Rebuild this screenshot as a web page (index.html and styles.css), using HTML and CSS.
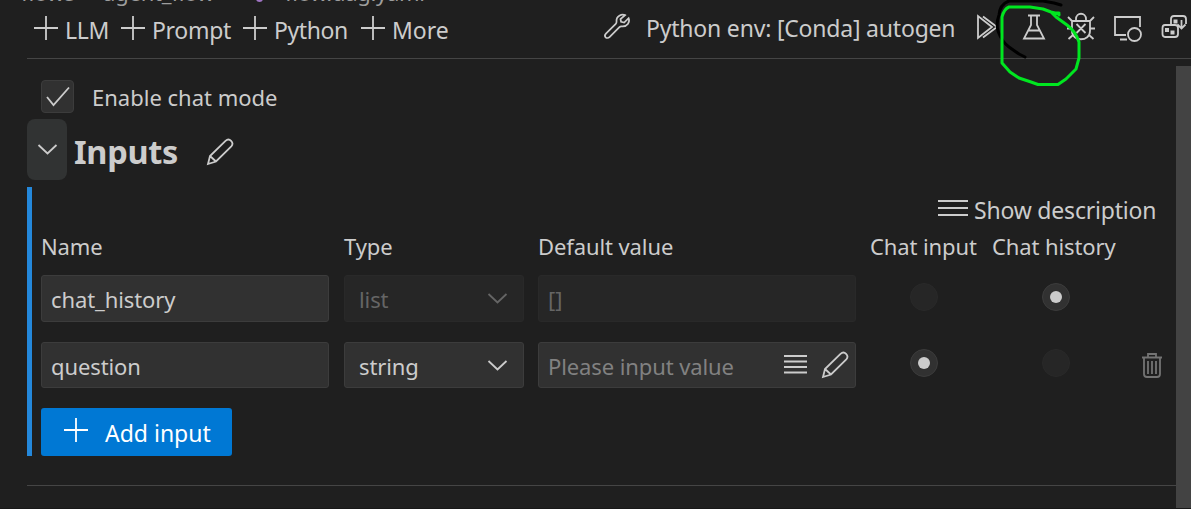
FILE: index.html
```
<!DOCTYPE html>
<html lang="en">
<head>
<meta charset="utf-8">
<title>flow.dag.yaml</title>
<link rel="stylesheet" href="styles.css">
</head>
<body>
<nav class="crumbs"><span class="crumb-a">flows</span><span class="crumb-sep">›</span><span class="crumb-b">agent_flow</span><span class="crumb-dot"></span><span class="crumb-c">flow.dag.yaml</span></nav>
<header class="toolbar">
  <div class="add-tools">
    <button class="tool tool-llm"><svg class="plus" viewBox="0 0 24 24"><path d="M12 0v24M0 12h24"/></svg><span>LLM</span></button>
    <button class="tool tool-prompt"><svg class="plus" viewBox="0 0 24 24"><path d="M12 0v24M0 12h24"/></svg><span>Prompt</span></button>
    <button class="tool tool-python"><svg class="plus" viewBox="0 0 24 24"><path d="M12 0v24M0 12h24"/></svg><span>Python</span></button>
    <button class="tool tool-more"><svg class="plus" viewBox="0 0 24 24"><path d="M12 0v24M0 12h24"/></svg><span>More</span></button>
  </div>
  <div class="env">
    <svg class="wrench" viewBox="0 0 28 28"><path d="M21.8 2.2C18.5.7 12.3 3 13 8.900c.1 1-.1 1.600-.8 2.300L2 21.400C.7 22.700.8 24.200 1.700 25.200c1 1 2.800 1 4-.2L16 14.700c.7-.7 1.300-.9 2.300-.8C24.200 14.500 27.200 9.500 25.500 5.400L20.900 10l-3.200-.8-.6-3z"/></svg>
    <span>Python env: [Conda] autogen</span>
  </div>
  <div class="actions">
    <svg class="run" viewBox="0 0 24 26"><path d="M2 2v22l14-11zM7 2.500L21 13 7 23.500"/></svg>
    <svg class="flask" viewBox="0 0 24 26"><path d="M6 1.500h12M9 1.500v9.500L2 24.500h20l-7-13.500v-9.500M6 16.500h12"/></svg>
    <svg class="bug" viewBox="0 0 30 30"><path d="M10 9V7c0-7 10-7 10 0v2M6 9h18v10c0 11-18 11-18 0zM10.500 12l9 9M19.500 12l-9 9M1 16.500h5M24 16.500h5M6 9L2 5M24 9l4-4M7 23l-4.500 4M23 23l4.500 4"/></svg>
    <svg class="remote" viewBox="0 0 30 28"><path d="M13 20H2V2h25v10M7 24.500h7"/><circle cx="21.500" cy="19.500" r="6.500"/></svg>
    <svg class="windows" viewBox="0 0 28 26"><path d="M10 10V4q0-3 3-3h9q3 0 3 3v5M4 10h10q3 0 3 3v6q0 3-3 3H4q-2.500 0-2.500-3v-6q0-3 2.500-3zM20.500 5v8.500M16.500 9.500l4 4 4-4"/><path class="solid" d="M4 13h4v4H4zM9.500 15.500h4v4h-4zM12.500 4.500h4v4h-4z"/></svg>
  </div>
  <svg class="markup" viewBox="0 0 90 90"><path class="ink-black" d="M64 5L57 3 46 1H12Q3 4 2 15Q-1 23 1 31Q5 42 12 47L22 54 28 57"/><path class="ink-green" d="M62 15V14L54 12 46 9 33 7H12Q7 9 5 17V63L13 72 22 78 34 82 41 84.500H61L69 79 79 69 82 58V42Q79 32 70 25L59 17 55 13 62 13"/></svg>
</header>
<main class="content">
  <label class="chat-mode"><span class="checkbox"><svg class="tick" viewBox="0 0 24 22"><path d="M1 11l6.500 8L23 1.500"/></svg></span><span class="mode-text">Enable chat mode</span></label>
  <div class="heading">
    <button class="collapse"><svg class="chevron" viewBox="0 0 19 11"><path d="M.5 1l9 8.500 9-8.500"/></svg></button>
    <h1>Inputs</h1>
    <svg class="pencil" viewBox="0 0 28 28"><path d="M2 26l2-8L19.500 2.800c4-3.600 9 1.800 5.800 5.500L10 23.500zM4 18l6 5.500"/></svg>
  </div>
  <section class="panel">
    <div class="describe"><svg class="lines" viewBox="0 0 30 18"><path d="M0 2h30M0 9h30M0 16h30"/></svg><span>Show description</span></div>
    <div class="row labels"><span>Name</span><span>Type</span><span>Default value</span><span>Chat input</span><span>Chat history</span></div>
    <div class="row fields first">
      <div class="field name">chat_history</div>
      <div class="field select off"><span>list</span><svg class="chevron" viewBox="0 0 19 11"><path d="M.5 1l9 8.500 9-8.500"/></svg></div>
      <div class="field off">[]</div>
      <span class="radio off"></span><span class="radio on"></span>
    </div>
    <div class="row fields second">
      <div class="field name">question</div>
      <div class="field select"><span>string</span><svg class="chevron" viewBox="0 0 19 11"><path d="M.5 1l9 8.500 9-8.500"/></svg></div>
      <div class="field value"><span class="hint">Please input value</span><svg class="menu" viewBox="0 0 23 20"><path d="M0 2h23M0 7.500h23M0 13h23M0 18.500h23"/></svg><svg class="pencil" viewBox="0 0 28 28"><path d="M2 26l2-8L19.500 2.800c4-3.600 9 1.800 5.800 5.500L10 23.500zM4 18l6 5.500"/></svg></div>
      <span class="radio on"></span><span class="radio off"></span>
      <svg class="trash" viewBox="0 0 20 25"><path d="M0 4.500h20M6 4V1h8v3M2 5v16q0 3 3 3h10q3 0 3-3V5M6 8v13M10 8v13M14 8v13"/></svg>
    </div>
    <button class="add-input"><svg class="plus" viewBox="0 0 24 24"><path d="M12 0v24M0 12h24"/></svg><span>Add input</span></button>
  </section>
</main>
<aside class="scrollbar"></aside>
</body>
</html>
```
FILE: styles.css
```
* { box-sizing: border-box; }
body { margin: 0; width: 1191px; height: 509px; overflow: hidden; position: relative; background: #1f1f1f; color: #ccc; font: 22px/30px "Noto Sans", "Open Sans", sans-serif; border-bottom: 1px solid #181818; white-space: nowrap; }
button { font: inherit; color: inherit; background: none; border: 0; padding: 0; margin: 0; display: flex; }
svg { display: block; flex: none; overflow: visible; fill: none; stroke: #ccc; stroke-width: 1.800; }
span, h1 { flex: none; }

.crumbs { height: 6px; padding-left: 21px; display: flex; align-items: flex-end; overflow: hidden; color: #9d9d9d; }
.crumbs span { margin-bottom: -1px; }
.crumb-a { width: 62px; }
.crumb-sep { width: 20px; }
.crumb-b { width: 153px; letter-spacing: -.2px; }
.crumbs .crumb-dot { width: 7px; height: 7px; border-radius: 50%; background: #a074c4; margin-bottom: 4px; }
.crumb-c { margin-left: 22px; letter-spacing: -.3px; }

.toolbar { position: relative; height: 53px; margin-left: 27px; border-bottom: 1px solid #454545; display: flex; font-size: 23px; }
.add-tools { display: flex; padding: 9px 0 0 7px; width: 576px; }
.plus { width: 24px; height: 24px; }
.tool .plus { margin-top: 1px; }
.tool span { margin-left: 7px; }
.tool-llm { width: 87px; letter-spacing: -.3px; }
.tool-prompt { width: 122px; letter-spacing: -.3px; }
.tool-python { width: 118px; letter-spacing: -.4px; }
.env { display: flex; padding: 7px 0 0 1px; width: 373px; letter-spacing: -.2px; }
.wrench { width: 27px; height: 27px; margin-right: 15px; }
.actions { display: flex; align-items: flex-start; padding-top: 8px; }
.run { width: 24px; height: 26px; margin-right: 22px; }
.flask { width: 24px; height: 26px; margin-right: 20px; }
.bug { width: 30px; height: 30px; margin: -2px 17px 0 0; }
.remote { width: 30px; height: 28px; margin: 1px 18px 0 0; }
.windows { width: 28px; height: 26px; margin-top: 1px; }
.windows .solid { fill: #ccc; stroke: none; }
.markup { position: absolute; left: 970px; top: -6px; width: 90px; height: 90px; z-index: 2; stroke-width: 3; stroke-linejoin: round; stroke-linecap: round; }
.ink-black { stroke: #000; }
.ink-green { stroke: #00e620; }

.content { margin-left: 27px; width: 1149px; height: 427px; padding-top: 21px; border-bottom: 1px solid #454545; }
.chat-mode { display: flex; height: 39px; padding-left: 14px; }
.checkbox { width: 33px; height: 33px; margin-right: 18px; border: 1px solid #3c3c3c; border-radius: 4px; background: #313131; display: grid; place-items: center; }
.tick { width: 24px; height: 22px; }
.mode-text { margin-top: 2px; }
.heading { display: flex; height: 68px; }
.collapse { width: 40px; height: 61px; border-radius: 8px; background: #313333; justify-content: center; padding-top: 25px; margin-right: 7px; }
.chevron { width: 19px; height: 11px; }
h1 { width: 105px; margin: 12px 27px 0 0; font-size: 32.500px; line-height: 42px; font-weight: 700; letter-spacing: -.3px; }
.heading .pencil { margin-top: 19px; }
.pencil { width: 28px; height: 28px; }

.panel { border-left: 5px solid #2488db; padding: 8px 0 0 9px; height: 269px; }
.describe { display: flex; padding-left: 897px; height: 36px; font-size: 23px; letter-spacing: -.2px; }
.lines { width: 30px; height: 18px; margin: 4px 6px 0 0; }
.row { display: grid; align-items: center; }
.labels { grid-template-columns: 303px 194px 332px 122px 150px; height: 28px; letter-spacing: -.1px; }
.fields { grid-template-columns: 303px 194px 318px 136px 127px 30px; }
.first { height: 47px; margin-top: 16px; }
.second { height: 46px; margin-top: 20px; }
.field { height: 100%; display: flex; align-items: center; border: 1px solid #3c3c3c; background: #313131; border-radius: 3px; padding: 1px 6px 0 9px; letter-spacing: -.1px; }
.field.name { width: 288px; }
.field.select { width: 180px; justify-content: space-between; padding: 1px 16px 0 14px; }
.select svg { margin-top: -1px; }
.field.off { background: #262626; border-color: #292929; color: #656565; }
.off svg { stroke: #656565; }
.hint { color: #818181; }
.menu { width: 23px; height: 20px; margin: -4px 14px 0 auto; }
.value .pencil { margin-top: -2px; }
.radio { width: 28px; height: 28px; margin-top: -4px; border-radius: 50%; border: 1px solid #292929; background: #262626; justify-self: center; display: grid; place-items: center; }
.radio.on { background: #313131; border-color: #3c3c3c; }
.radio.on::after { content: ""; width: 12px; height: 12px; border-radius: 50%; background: #ccc; }
.trash { width: 20px; height: 25px; stroke: #737373; margin-left: 23px; }
.add-input { width: 191px; height: 48px; margin-top: 20px; border-radius: 3px; background: #0078d4; color: #fff; padding: 10px 0 0 23px; font-size: 23px; }
.add-input .plus { stroke: #fff; margin-right: 17px; }

.scrollbar { position: absolute; right: 0; top: 66px; bottom: 0; width: 15px; background: #434343; }
```
